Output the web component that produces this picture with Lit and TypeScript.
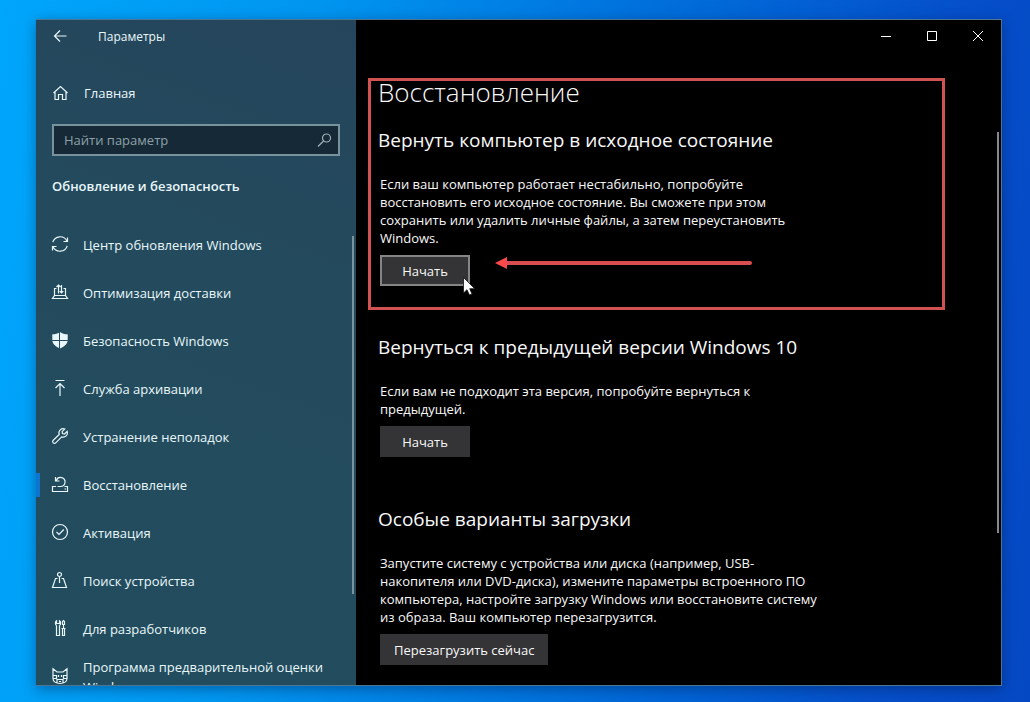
import { LitElement, html, css, svg, SVGTemplateResult } from "lit";
import { customElement, property } from "lit/decorators.js";

const icons: Record<string, SVGTemplateResult> = {
  back: svg`<path d="M2.5 8h12M8 2.5 2.5 8 8 13.5" />`,
  home: svg`<path d="M1.5 8 8.5 1.5 15.5 8M3 7v7.5h3.500V9.500h4V14.500H14V7" />`,
  search: svg`<circle cx="10.500" cy="6" r="4" /><path d="M7.500 9 2 14.500" />`,
  update: svg`<path d="M.8 6.200A7.600 7.600 0 0 1 15 5.200M15.500 1.500v4h-4M15.200 9.800A7.600 7.600 0 0 1 1 10.800M.5 14.500v-4h4" />`,
  delivery: svg`<path d="M4.500 4.500h-2v7M11.500 4.500h2v7M2.500 11.500l-2 3h15l-2-3zM6.500 9.500V1M4.500 3 6.500 1l2 2M9.500 1V9M7.700 7.200 9.500 9l1.800-1.800" />`,
  shield: svg`<path class="solid" d="M8 0c2 1.600 4.500 2.300 7.700 2.300V8c0 4-3.500 6.500-7.700 8.500C3.800 14.500.3 12 .3 8V2.300C3.500 2.300 6 1.600 8 0z" /><path class="cut" d="M7.500 0v17M0 8.500h16" />`,
  backup: svg`<path d="M3.500 .5h9M8 16V3.500M3.500 8 8 3.500 12.500 8" />`,
  wrench: svg`<path d="M12.800 1A4.300 4.300 0 0 0 7.200 6.500L1.200 12.300a1.700 1.700 0 0 0 2.500 2.500l6-5.900A4.300 4.300 0 0 0 15.200 3.400L12.500 6l-2-.400-.400-2z" />`,
  recovery: svg`<path d="M4 10.500H.5v5h15v-5H12.500M4.300 4.500A4.500 4.500 0 1 1 8.500 10.500H5.500M3.500 1v4h4M12.500 13h1.500" />`,
  activation: svg`<circle cx="8" cy="8" r="7.500" /><path d="M4.500 8 7 10.500 11.800 5.500" />`,
  find: svg`<circle cx="7.500" cy="2.500" r="2" /><path d="M7.500 4.500v6.500M5.500 6.500h-2L.5 15.500h14L11.500 6.500h-2" />`,
  developer: svg`<path d="M4.500 5.500v10h3V5.500M4.500 5.500C3 4.500 3 1.500 4.500.8v2.700h3V.8C9 1.500 9 4.500 7.500 5.500M9.500 8.500h4M10.500 8.500v7h2v-7M11.500 8V4.500M10.500 4.500v-3l1-1 1 1v3z" />`,
  insider: svg`<path d="M1 .8v9.700c0 3 3 5 7 5s7-2 7-5V.8L11 4H5zM1 7.500h3.500v3H1M15 7.500h-3.500v3H15M6.500 7v2M9.500 7v2M5 15v-3.500h6V15M7 13.500h2" />`,
};

const navItems = [
  { icon: "update", text: "Центр обновления Windows" },
  { icon: "delivery", text: "Оптимизация доставки" },
  { icon: "shield", text: "Безопасность Windows" },
  { icon: "backup", text: "Служба архивации" },
  { icon: "wrench", text: "Устранение неполадок" },
  { icon: "recovery", text: "Восстановление", current: true },
  { icon: "activation", text: "Активация" },
  { icon: "find", text: "Поиск устройства" },
  { icon: "developer", text: "Для разработчиков" },
  { icon: "insider", text: "Программа предварительной оценки Windows" },
];

@customElement("line-icon")
class LineIcon extends LitElement {
  @property() name = "";

  static styles = css`
    :host { display: block; flex: none; width: 17px; height: 17px; }
    svg { display: block; width: 100%; height: 100%; overflow: visible; fill: none; stroke: currentColor; stroke-width: 1.2; }
    .solid { fill: currentColor; stroke: none; }
    .cut { stroke: #234b5d; stroke-width: 1; }
  `;

  render() {
    return html`<svg viewBox="0 0 17 17" aria-hidden="true">${icons[this.name]}</svg>`;
  }
}

@customElement("settings-sidebar")
class SettingsSidebar extends LitElement {
  static styles = css`
    :host {
      display: flex; flex-direction: column; position: relative; overflow: hidden; min-height: 0;
      background: linear-gradient(200deg, #25455c 0%, #234b5d 45%, #224d5e 100%);
      color: #e9f7fa;
    }
    .titlebar { display: flex; align-items: center; flex: none; height: 32px; padding-left: 16px; font-size: 12px; }
    .back { display: flex; width: 46px; padding: 0; border: 0; background: none; color: inherit; }
    a { display: flex; align-items: center; gap: 14px; box-sizing: border-box; height: 48px; padding: 0 16px; color: inherit; text-decoration: none; line-height: 20px; }
    .home { flex: none; gap: 15px; margin-top: 17px; }
    .search { display: flex; align-items: center; flex: none; box-sizing: border-box; height: 32px; margin: 7px 16px 0; padding: 0 5px 0 10px; border: 2px solid #78929d; background: #152a36; color: #9fb0b8; }
    input { flex: 1; min-width: 0; padding: 0; border: 0; outline: 0; background: none; font: inherit; color: inherit; }
    input::placeholder { color: #8fa0a8; opacity: 1; }
    h2 { flex: none; margin: 20px 16px 25px; font-size: 13px; line-height: 20px; font-weight: 600; }
    ul { flex: 1; min-height: 0; margin: 0; padding: 0; overflow: hidden; list-style: none; }
    li line-icon { margin-bottom: 2px; }
    .current { background: linear-gradient(#0d74cf, #0d74cf) left center / 4px 24px no-repeat; }
    .thumb { position: absolute; right: 2px; top: 216px; bottom: 91px; width: 2px; background: #7b939d; }
  `;

  render() {
    return html`
      <div class="titlebar">
        <button class="back" aria-label="Назад"><line-icon name="back"></line-icon></button>
        <span>Параметры</span>
      </div>
      <a class="home" href="#home"><line-icon name="home"></line-icon>Главная</a>
      <label class="search">
        <input type="text" placeholder="Найти параметр" aria-label="Найти параметр" />
        <line-icon name="search"></line-icon>
      </label>
      <h2>Обновление и безопасность</h2>
      <ul>
        ${navItems.map(
          (item) => html`<li>
            <a class=${item.current ? "current" : ""} href="#${item.icon}">
              <line-icon name=${item.icon}></line-icon><span>${item.text}</span>
            </a>
          </li>`,
        )}
      </ul>
      <div class="thumb"></div>
    `;
  }
}

@customElement("recovery-page")
class RecoveryPage extends LitElement {
  static styles = css`
    :host { display: block; position: relative; overflow: hidden; min-height: 0; background: #000; color: #f8f8f8; }
    .controls { display: flex; justify-content: flex-end; height: 32px; }
    .controls button { display: grid; place-items: center; width: 46px; padding: 0; border: 0; background: none; color: #fff; }
    .controls svg { width: 10px; height: 10px; fill: none; stroke: currentColor; overflow: visible; }
    .marked { margin: 26px 56px 0 12px; padding: 0 9px 21px; border: 3px solid #d05253; }
    h1 { margin: 0 0 25px -2px; font-size: 26px; line-height: 22px; font-weight: 350; }
    h2 { margin: 0 0 23px -2px; font-size: 19px; line-height: 24px; font-weight: 400; }
    p { max-width: 446px; margin: 0 0 8px; line-height: 18px; }
    section.plain { margin: 25px 56px 50px 24px; }
    .action { min-width: 90px; height: 31px; padding: 0 14px; border: 0; background: #343335; color: inherit; font: inherit; }
    .row { display: flex; align-items: flex-start; gap: 25px; }
    .target { position: relative; display: flex; }
    .hover { border: 2px solid #858585; }
    .cursor { position: absolute; left: 83px; top: 22px; width: 13px; height: 19px; }
    .arrow { width: 258px; height: 16px; }
    .thumb { position: absolute; right: 2px; top: 112px; bottom: 152px; width: 2px; background: #86888c; }
  `;

  render() {
    return html`
      <div class="controls">
        <button aria-label="Свернуть"><svg><path d="M0 5.500h10" /></svg></button>
        <button aria-label="Развернуть"><svg><path d="M.5 .5h9v9h-9z" /></svg></button>
        <button aria-label="Закрыть"><svg><path d="M0 0l10 10M10 0 0 10" /></svg></button>
      </div>
      <div class="marked">
        <h1>Восстановление</h1>
        <section>
          <h2>Вернуть компьютер в исходное состояние</h2>
          <p>Если ваш компьютер работает нестабильно, попробуйте восстановить его исходное состояние. Вы сможете при этом сохранить или удалить личные файлы, а затем переустановить Windows.</p>
          <div class="row">
            <div class="target">
              <button class="action hover">Начать</button>
              <svg class="cursor" viewBox="0 0 13 19" aria-hidden="true">
                <path d="M.5 .5v15.500l3.500-3.300 2.400 5.300 2.600-1.100-2.300-5.200h5z" fill="#fff" stroke="#111" stroke-width=".8" />
              </svg>
            </div>
            <svg class="arrow" viewBox="0 0 258 16" aria-hidden="true">
              <path d="M9 8h246" stroke="#d84e50" stroke-width="4" stroke-linecap="round" />
              <path d="M0 8 12 2v12z" fill="#f9494a" />
            </svg>
          </div>
        </section>
      </div>
      <section class="plain">
        <h2>Вернуться к предыдущей версии Windows 10</h2>
        <p>Если вам не подходит эта версия, попробуйте вернуться к предыдущей.</p>
        <button class="action">Начать</button>
      </section>
      <section class="plain">
        <h2>Особые варианты загрузки</h2>
        <p>Запустите систему с устройства или диска (например, USB-накопителя или DVD-диска), измените параметры встроенного ПО компьютера, настройте загрузку Windows или восстановите систему из образа. Ваш компьютер перезагрузится.</p>
        <button class="action">Перезагрузить сейчас</button>
      </section>
      <div class="thumb"></div>
    `;
  }
}

@customElement("app-root")
class AppRoot extends LitElement {
  static styles = css`
    :host {
      display: block; box-sizing: border-box; height: 100vh; padding: 19px 28px 16px 36px;
      background: linear-gradient(97deg, #00a6fb 0%, #0096f0 28%, #0070dc 58%, #0550cb 85%, #0548c4 100%);
      font-family: "Open Sans", "Noto Sans", sans-serif; font-size: 13px;
    }
    .window {
      display: grid; grid-template-columns: 320px minmax(0, 1fr); grid-template-rows: minmax(0, 1fr);
      box-sizing: border-box; height: 100%;
      border: solid #4a7796; border-width: 1px 1px 1px 0;
      box-shadow: 0 3px 12px rgba(0, 20, 60, 0.4);
    }
  `;

  render() {
    return html`<div class="window">
      <settings-sidebar></settings-sidebar>
      <recovery-page></recovery-page>
    </div>`;
  }
}
